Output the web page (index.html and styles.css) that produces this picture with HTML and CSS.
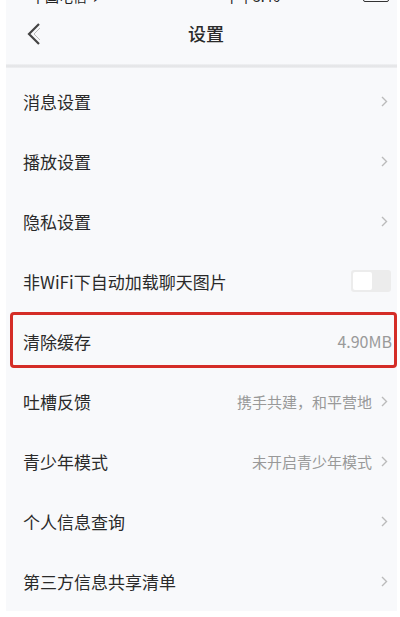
FILE: index.html
```html
<!DOCTYPE html>
<html lang="zh">
<head>
<meta charset="utf-8">
<link rel="stylesheet" href="styles.css">
</head>
<body>
<div class="frame">
  <div class="screen">
    <div class="status">
      <span class="carrier"><span class="bars"><i></i><i></i><i></i><i></i></span>中国电信 ✈</span>
      <span class="time">下午3:46</span>
      <span class="battery"></span>
    </div>
    <div class="nav">
      <svg class="back" width="16" height="24" viewBox="0 0 16 24"><polyline points="13,2 3,12 13,22" fill="none" stroke="#444" stroke-width="2.2" stroke-linejoin="miter"/><polyline points="14,6 8,12 14,18" fill="none" stroke="#bbb" stroke-width="1"/></svg>
      <span class="title">设置</span>
    </div>
    <div class="divider"></div>
    <ul class="list">
      <li class="row"><span class="label">消息设置</span><span class="right"><svg class="chev" width="7" height="11" viewBox="0 0 7 11"><polyline points="1,1 5.5,5.5 1,10" fill="none" stroke="#bbb" stroke-width="1.4"/></svg></span></li>
      <li class="row"><span class="label">播放设置</span><span class="right"><svg class="chev" width="7" height="11" viewBox="0 0 7 11"><polyline points="1,1 5.5,5.5 1,10" fill="none" stroke="#bbb" stroke-width="1.4"/></svg></span></li>
      <li class="row"><span class="label">隐私设置</span><span class="right"><svg class="chev" width="7" height="11" viewBox="0 0 7 11"><polyline points="1,1 5.5,5.5 1,10" fill="none" stroke="#bbb" stroke-width="1.4"/></svg></span></li>
      <li class="row"><span class="label">非WiFi下自动加载聊天图片</span><span class="right"><span class="toggle"><span class="knob"></span></span></span></li>
      <li class="row highlight"><span class="label">清除缓存</span><span class="right"><span class="value size">4.90MB</span></span><span class="mark"></span></li>
      <li class="row"><span class="label">吐槽反馈</span><span class="right"><span class="value">携手共建，和平营地</span><svg class="chev" width="7" height="11" viewBox="0 0 7 11"><polyline points="1,1 5.5,5.5 1,10" fill="none" stroke="#bbb" stroke-width="1.4"/></svg></span></li>
      <li class="row"><span class="label">青少年模式</span><span class="right"><span class="value">未开启青少年模式</span><svg class="chev" width="7" height="11" viewBox="0 0 7 11"><polyline points="1,1 5.5,5.5 1,10" fill="none" stroke="#bbb" stroke-width="1.4"/></svg></span></li>
      <li class="row"><span class="label">个人信息查询</span><span class="right"><svg class="chev" width="7" height="11" viewBox="0 0 7 11"><polyline points="1,1 5.5,5.5 1,10" fill="none" stroke="#bbb" stroke-width="1.4"/></svg></span></li>
      <li class="row"><span class="label">第三方信息共享清单</span><span class="right"><svg class="chev" width="7" height="11" viewBox="0 0 7 11"><polyline points="1,1 5.5,5.5 1,10" fill="none" stroke="#bbb" stroke-width="1.4"/></svg></span></li>
    </ul>
  </div>
</div>
</body>
</html>
```
FILE: styles.css
```css
html, body {
  margin: 0;
  padding: 0;
  background: #ffffff;
}
body {
  font-family: "Noto Sans CJK SC", "Noto Sans", sans-serif;
  color: #333;
}
.frame {
  width: 400px;
  height: 617px;
  overflow: hidden;
  padding: 0 3px 0 6px;
  box-sizing: border-box;
  background: #fff;
}
.screen {
  background: #f8f9fb;
  height: 611px;
  overflow: hidden;
}
.status {
  height: 20px;
  margin-top: -14px;
  display: flex;
  align-items: center;
  justify-content: space-between;
  font-size: 14px;
  color: #222;
  padding: 0 8px 0 6px;
}
.carrier {
  display: flex;
  align-items: center;
  gap: 4px;
}
.bars {
  display: flex;
  gap: 1px;
  align-items: flex-end;
}
.bars i {
  display: block;
  width: 3px;
  height: 8px;
  background: #222;
}
.time {
  margin-left: 40px;
}
.battery {
  width: 24px;
  height: 10px;
  border: 1px solid #333;
  border-radius: 2px;
}
.nav {
  height: 58px;
  display: flex;
  align-items: center;
  justify-content: center;
  position: relative;
}
.back {
  position: absolute;
  left: 20px;
  top: 16px;
}
.title {
  font-size: 18px;
  font-weight: 500;
  color: #2a2a2a;
  margin-left: 9px;
  margin-top: -4px;
}
.divider {
  height: 4px;
  background: linear-gradient(#f1f2f4, #e2e3e5 50%, #eff0f2);
}
.list {
  list-style: none;
  margin: 0;
  padding: 3px 0 0 0;
}
.row {
  height: 60px;
  display: flex;
  align-items: center;
  justify-content: space-between;
  padding: 0 9px 0 17px;
  position: relative;
}
.label {
  font-size: 17px;
  color: #2a2a2a;
}
.right {
  display: flex;
  align-items: center;
  gap: 9px;
}
.value {
  font-size: 15px;
  color: #999;
}
.value.size {
  font-size: 16px;
  color: #9a9a9a;
  margin-right: -4px;
}
.chev {
  display: block;
}
.toggle {
  width: 40px;
  height: 22px;
  background: #ececec;
  border-radius: 3px;
  display: flex;
  align-items: center;
  padding: 0 2px;
  box-sizing: border-box;
  margin-right: -3px;
}
.knob {
  width: 19px;
  height: 18px;
  background: #fff;
  border-radius: 2px;
}
.mark {
  position: absolute;
  left: 4px;
  right: 0;
  top: 1px;
  bottom: 3px;
  border: 3px solid #d42d27;
  border-radius: 4px;
}
```
